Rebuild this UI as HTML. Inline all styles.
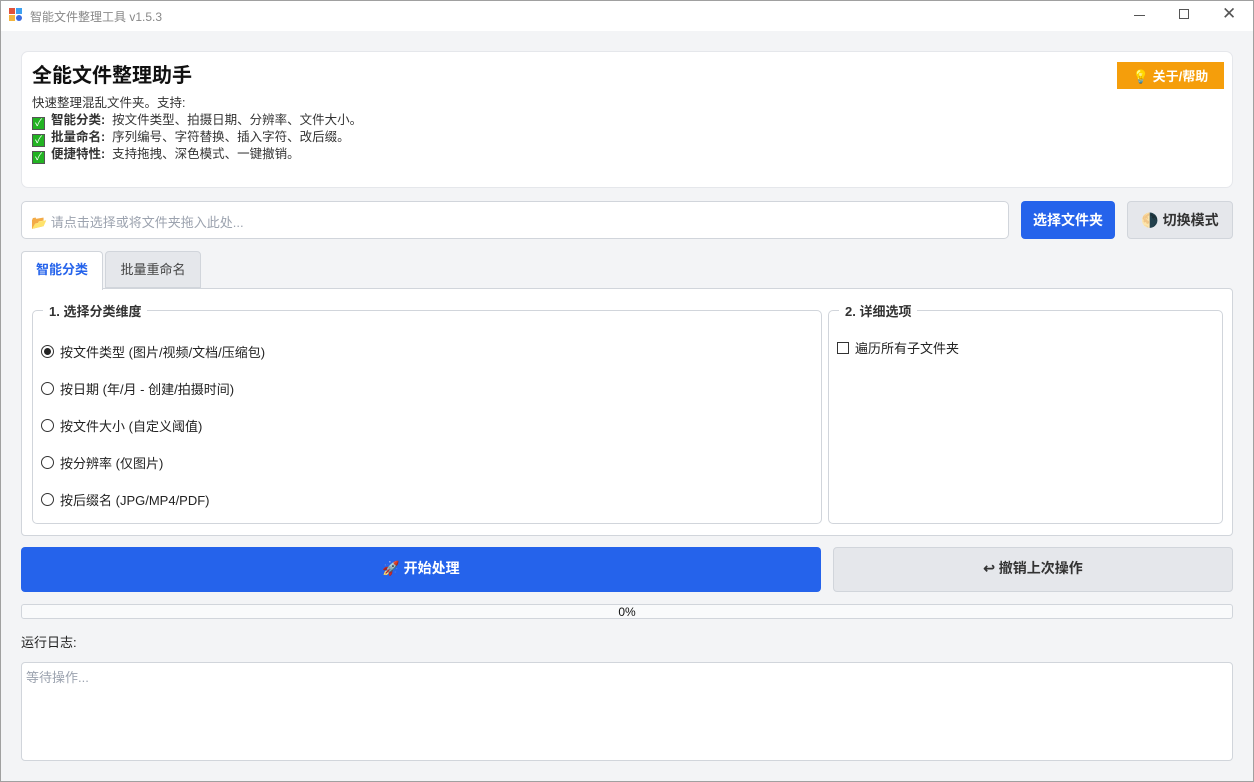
<!DOCTYPE html>
<html><head><meta charset="utf-8"><style>
*{box-sizing:border-box;margin:0;padding:0}
body{width:1254px;height:782px;background:#f3f4f6;font-family:"Liberation Sans","Noto Sans CJK SC",sans-serif;color:#1f2937;position:relative;overflow:hidden}
.abs{position:absolute}
.title{left:0;top:0;width:1254px;height:31px;background:#fff;font-size:12px;color:#888}
.card{background:#fff;border:1px solid #e5e7eb;border-radius:7px}
.btn{display:flex;align-items:center;justify-content:center;font-size:14px;font-weight:bold;border-radius:4px}
.gb{border:1px solid #d1d5db;border-radius:5px}
.legend{position:absolute;top:-10px;background:#fff;padding:0 6px;font-size:13px;font-weight:bold;color:#333}
.radio{position:absolute;left:8px;font-size:13px;color:#222;display:flex;align-items:center}
.radio i{width:13px;height:13px;border:1px solid #333;border-radius:50%;margin-right:6px;display:inline-block;position:relative}
.radio i.on:after{content:"";position:absolute;left:2px;top:2px;width:7px;height:7px;border-radius:50%;background:#222}
.chk{display:inline-block;width:13px;height:13px;background:#22b322;border:1px solid #555;color:#fff;font-size:10px;line-height:11px;text-align:center;margin-right:6px;vertical-align:-2px}
.ln{font-size:12.5px;color:#333;height:17px;line-height:17px}
</style></head><body>
<div class="abs title">
 <div class="abs" style="left:9px;top:8px;width:6px;height:6px;background:#e0523b"></div>
 <div class="abs" style="left:16px;top:8px;width:6px;height:6px;background:#3da0f0"></div>
 <div class="abs" style="left:9px;top:15px;width:6px;height:6px;background:#f3b53d"></div>
 <div class="abs" style="left:16px;top:15px;width:6px;height:6px;background:#3a6ae0;border-radius:50%"></div>
 <div class="abs" style="left:30px;top:8px">智能文件整理工具 v1.5.3</div>
 <div class="abs" style="left:1134px;top:15px;width:11px;height:1px;background:#555"></div>
 <div class="abs" style="left:1179px;top:9px;width:10px;height:10px;border:1px solid #555"></div>
 <div class="abs" style="left:1222px;top:4px;font-size:17px;color:#555">✕</div>
</div>
<div class="abs card" style="left:21px;top:51px;width:1212px;height:137px">
 <div class="abs" style="left:10px;top:11px;font-size:20px;font-weight:bold;color:#111;line-height:26px">全能文件整理助手</div>
 <div class="abs" style="left:10px;top:43px">
  <div class="ln">快速整理混乱文件夹。支持:</div>
  <div class="ln"><span class="chk">✓</span><b>智能分类:</b>&nbsp; 按文件类型、拍摄日期、分辨率、文件大小。</div>
  <div class="ln"><span class="chk">✓</span><b>批量命名:</b>&nbsp; 序列编号、字符替换、插入字符、改后缀。</div>
  <div class="ln"><span class="chk">✓</span><b>便捷特性:</b>&nbsp; 支持拖拽、深色模式、一键撤销。</div>
 </div>
 <div class="abs btn" style="left:1095px;top:10px;width:107px;height:27px;background:#f59e0b;color:#fff;font-size:13px;border-radius:0">💡 关于/帮助</div>
</div>
<div class="abs card" style="left:21px;top:201px;width:988px;height:38px;border-radius:5px;border-color:#d1d5db">
 <div class="abs" style="left:9px;top:10px;font-size:13px;color:#9ca3af">📂 请点击选择或将文件夹拖入此处...</div>
</div>
<div class="abs btn" style="left:1021px;top:201px;width:94px;height:38px;background:#2563eb;color:#fff">选择文件夹</div>
<div class="abs btn" style="left:1127px;top:201px;width:106px;height:38px;background:#e5e7eb;border:1px solid #d1d5db;color:#333">🌗 切换模式</div>
<div class="abs" style="left:21px;top:251px;width:82px;height:39px;background:#fff;border:1px solid #d1d5db;border-bottom:none;border-radius:4px 4px 0 0;z-index:2;font-size:13px;font-weight:bold;color:#2563eb;text-align:center;line-height:36px">智能分类</div>
<div class="abs" style="left:105px;top:251px;width:96px;height:37px;background:#e5e7eb;border:1px solid #d1d5db;border-radius:4px 4px 0 0;font-size:13px;color:#444;text-align:center;line-height:36px">批量重命名</div>
<div class="abs" style="left:21px;top:288px;width:1212px;height:248px;background:#fff;border:1px solid #d1d5db;border-radius:0 4px 4px 4px">
 <div class="abs gb" style="left:10px;top:21px;width:790px;height:214px">
  <div class="legend" style="left:10px">1. 选择分类维度</div>
  <div class="radio" style="top:31px"><i class="on"></i>按文件类型 (图片/视频/文档/压缩包)</div>
  <div class="radio" style="top:68px"><i></i>按日期 (年/月 - 创建/拍摄时间)</div>
  <div class="radio" style="top:105px"><i></i>按文件大小 (自定义阈值)</div>
  <div class="radio" style="top:142px"><i></i>按分辨率 (仅图片)</div>
  <div class="radio" style="top:179px"><i></i>按后缀名 (JPG/MP4/PDF)</div>
 </div>
 <div class="abs gb" style="left:806px;top:21px;width:395px;height:214px">
  <div class="legend" style="left:10px">2. 详细选项</div>
  <div class="radio" style="top:27px"><i style="border-radius:0;width:12px;height:12px"></i>遍历所有子文件夹</div>
 </div>
</div>
<div class="abs btn" style="left:21px;top:547px;width:800px;height:45px;background:#2563eb;color:#fff;padding-bottom:3px">🚀 开始处理</div>
<div class="abs btn" style="left:833px;top:547px;width:400px;height:45px;background:#e5e7eb;border:1px solid #d1d5db;color:#333;padding-bottom:3px">↩ 撤销上次操作</div>
<div class="abs" style="left:21px;top:604px;width:1212px;height:15px;background:#f9fafb;border:1px solid #d1d5db;border-radius:3px;font-size:12px;text-align:center;line-height:14px;color:#111">0%</div>
<div class="abs" style="left:21px;top:632px;font-size:13px;color:#222">运行日志:</div>
<div class="abs" style="left:21px;top:662px;width:1212px;height:99px;background:#fff;border:1px solid #d1d5db;border-radius:4px;padding:4px 4px;font-size:13px;color:#9ca3af">等待操作...</div>
<div class="abs" style="left:0;top:0;width:1254px;height:782px;border:1px solid #a0a0a0;pointer-events:none"></div>
</body></html>
